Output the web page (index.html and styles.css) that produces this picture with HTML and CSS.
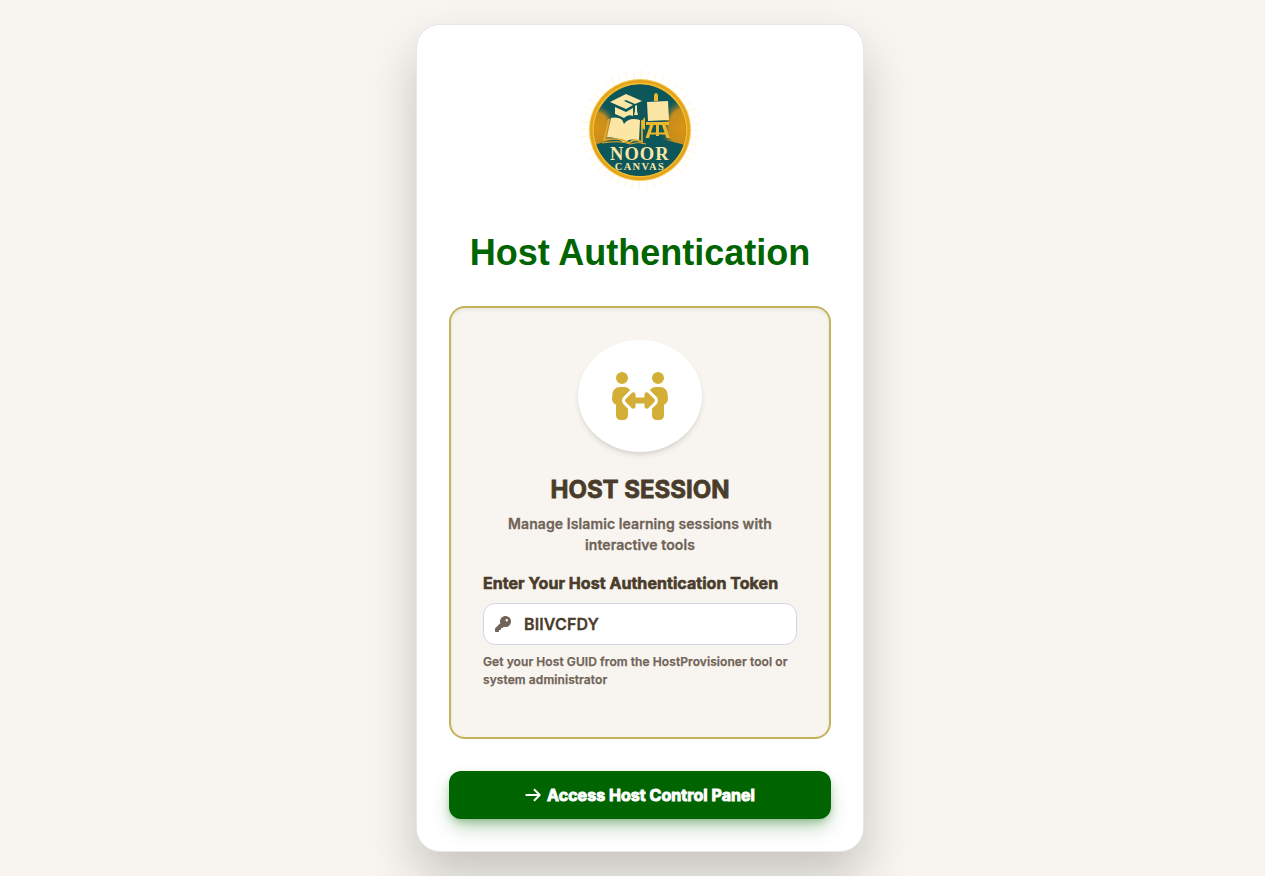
FILE: index.html
```
<!DOCTYPE html>
<html lang="en">
<head>
<meta charset="utf-8">
<title>Host Authentication</title>
<link rel="stylesheet" href="styles.css">
</head>
<body>
<main class="card">
  <div class="logo">
    <svg width="120" height="120" viewBox="0 0 120 120">
      <defs>
        <radialGradient id="glow"><stop offset="0" stop-color="#d99416"/><stop offset=".6" stop-color="#c58c1c"/><stop offset="1" stop-color="#0d575b" stop-opacity="0"/></radialGradient>
        <clipPath id="disc"><circle cx="60" cy="60" r="46"/></clipPath>
      </defs>
      <circle class="rays" cx="60" cy="60" r="54"/>
      <circle cx="60" cy="60" r="51" fill="#f6ca55"/>
      <circle cx="60" cy="60" r="50" fill="#e3a31d"/>
      <circle cx="60" cy="60" r="47.5" fill="#f4bb2c"/>
      <g clip-path="url(#disc)">
        <circle cx="60" cy="60" r="45.7" fill="#0d575b"/>
        <ellipse cx="17" cy="58" rx="20" ry="25" fill="url(#glow)"/>
        <ellipse cx="102" cy="58" rx="22" ry="31" fill="url(#glow)"/>
        <path d="M10 77Q30 67 51 76Q76 64 110 77V112H10z" fill="#0d575b"/>
      </g>
      <g fill="#fbe6a5">
        <path d="M30 32L46 24L62 31L55 34L46 30L44 31L53 35L46 39z"/>
        <path d="M35 37L46 42L53 38V46Q48 44 44 48Q40 46 35 44z"/>
        <path d="M55 36L57 35V41L58 45H54L55 41z"/>
        <path d="M31 48Q42 46 44 54Q49 47 60 50L59 71Q50 67 44 73Q38 67 27 67z"/>
        <path d="M67 32L88 31L89 50L68 51z"/>
      </g>
      <g fill="none" stroke="#e4aa2e" stroke-width="1.7">
        <path d="M29 49L24 70Q40 67 49 73Q54 68 62 72V50"/>
        <path d="M22 73Q40 70 50 74Q58 71 66 74" stroke-width="1"/>
      </g>
      <path d="M74 31V25Q76 21 78 25V31zM66 52H89V55H66zM70 55H73.5L69 68H65.5zM76 55H79V66H76zM82 55H85.5L90 68H86.500zM70 62.500H86V64.500H70zM61 52L65 47V60L62 58z" fill="#efb72c"/>
      <text class="logo-name" x="59.3" y="89.5" textLength="58.500">NOOR</text>
      <text class="logo-sub" x="59.3" y="100.400" textLength="49">CANVAS</text>
    </svg>
  </div>
  <h1 class="title">Host Authentication</h1>
  <section class="panel">
    <div class="badge">
      <svg width="60" height="48" viewBox="0 0 640 512" fill="#d4af37"><path d="M64 64a64 64 0 1 1 128 0A64 64 0 1 1 64 64zM25.9 233.4C29.3 191.9 64 160 105.6 160h44.8c27 0 51 13.4 65.5 34.1c-2.7 1.9-5.2 4-7.5 6.3l-64 64c-21.9 21.9-21.9 57.3 0 79.2L192 391.2V464c0 26.5-21.5 48-48 48H112c-26.5 0-48-21.5-48-48V348.3c-26.5-9.5-44.7-35.8-42.2-65.6l4.1-49.3zM448 64a64 64 0 1 1 128 0A64 64 0 1 1 448 64zM431.6 200.4c-2.3-2.3-4.9-4.4-7.5-6.3c14.5-20.7 38.6-34.1 65.5-34.1h44.8c41.6 0 76.3 31.9 79.7 73.4l4.1 49.3c2.5 29.8-15.7 56.1-42.2 65.6V464c0 26.5-21.5 48-48 48H496c-26.5 0-48-21.5-48-48V391.2l47.6-47.6c21.9-21.9 21.9-57.3 0-79.2l-64-64zM272 240v32h96V240c0-9.7 5.8-18.5 14.8-22.2s19.3-1.7 26.2 5.2l64 64c9.4 9.4 9.4 24.6 0 33.9l-64 64c-6.9 6.9-17.2 8.9-26.2 5.2s-14.8-12.5-14.8-22.2V336H272v32c0 9.7-5.8 18.5-14.8 22.2s-19.3 1.7-26.2-5.2l-64-64c-9.4-9.4-9.4-24.6 0-33.9l64-64c6.9-6.9 17.2-8.9 26.2-5.2s14.8 12.5 14.8 22.2z"/></svg>
    </div>
    <h2 class="heading">HOST SESSION</h2>
    <p class="subtitle">Manage Islamic learning sessions with interactive tools</p>
    <label class="label">Enter Your Host Authentication Token</label>
    <div class="field">
      <svg width="16" height="16" viewBox="0 0 512 512" fill="#706357"><path d="M336 352c97.2 0 176-78.8 176-176S433.2 0 336 0S160 78.8 160 176c0 18.7 2.9 36.8 8.3 53.7L7 391c-4.5 4.5-7 10.6-7 17v80c0 13.3 10.7 24 24 24h80c13.3 0 24-10.7 24-24V448h40c13.3 0 24-10.7 24-24V384h40c6.4 0 12.5-2.5 17-7l33.3-33.3c16.9 5.4 35 8.3 53.7 8.3zM376 96a40 40 0 1 1 0 80 40 40 0 1 1 0-80z"/></svg>
      <span>BIIVCFDY</span>
    </div>
    <p class="hint">Get your Host GUID from the HostProvisioner tool or system administrator</p>
  </section>
  <button class="submit">
    <svg width="18" height="18" viewBox="0 0 24 24" fill="none" stroke="#fff" stroke-width="2.6" stroke-linecap="round" stroke-linejoin="round"><path d="M14 5l7 7m0 0l-7 7m7-7H3"/></svg>
    <span>Access Host Control Panel</span>
  </button>
</main>
</body>
</html>
```
FILE: styles.css
```
* { box-sizing: border-box; }
html { overflow: hidden; }
body {
  margin: 0;
  height: 876px;
  padding: 24px 0 0 15px;
  overflow: hidden;
  background: #f8f5f0;
  font-family: Inter, "Liberation Sans", sans-serif;
  font-weight: 600;
  color: #4a3c2b;
}
.card {
  width: 448px;
  height: 828px;
  margin: 0 auto;
  padding: 32px;
  border: 1px solid #e5e7eb;
  border-radius: 24px;
  background: #fff;
  box-shadow: 0 25px 50px rgba(0, 0, 0, .2);
}
.logo { display: flex; justify-content: center; padding-top: 13px; height: 173px; }
.rays { fill: none; stroke: #fef6dd; stroke-width: 12; stroke-dasharray: 1 6.07; }
.logo-name, .logo-sub { font-family: "Liberation Serif", serif; font-weight: 700; fill: #fbe6a5; text-anchor: middle; }
.logo-name { font-size: 18.5px; }
.logo-sub { font-size: 10.5px; }
.title {
  margin: 0;
  height: 76px;
  font: 700 36px/45px "Liberation Sans", Arial, sans-serif;
  text-align: center;
  color: #006400;
}
.panel {
  height: 433px;
  padding: 32px;
  border: 2px solid #c5b358;
  border-radius: 16px;
  background: #f8f5f0;
  box-shadow: inset 0 2px 4px rgba(0, 0, 0, .06);
}
.badge {
  display: flex;
  align-items: center;
  justify-content: center;
  width: 124px;
  height: 112px;
  margin: 0 auto 22px;
  border-radius: 50%;
  background: #fff;
  box-shadow: 0 4px 6px -1px rgba(0, 0, 0, .1), 0 2px 4px -2px rgba(0, 0, 0, .1);
}
.heading {
  margin: 0 0 7px;
  font-size: 24px;
  line-height: 32px;
  font-weight: 700;
  text-align: center;
  -webkit-text-stroke: .8px currentColor;
}
.subtitle { margin: 0 0 16px; font-size: 14px; line-height: 21px; letter-spacing: .09px; text-align: center; color: #706357; -webkit-text-stroke: .3px currentColor; }
.label { display: block; margin-bottom: 8px; font-size: 16px; line-height: 24px; font-weight: 700; letter-spacing: .05px; -webkit-text-stroke: .6px currentColor; }
.field {
  display: flex;
  align-items: center;
  gap: 13px;
  height: 42px;
  padding: 0 11px;
  border: 1px solid #d1d5db;
  border-radius: 12px;
  background: #fff;
  font-size: 16px;
  letter-spacing: .15px;
  -webkit-text-stroke: .3px currentColor;
}
.hint { margin: 8px 0 0; font-size: 12px; line-height: 18px; letter-spacing: .08px; color: #706357; -webkit-text-stroke: .25px currentColor; }
.submit {
  display: flex;
  align-items: center;
  justify-content: center;
  gap: 5.5px;
  width: 100%;
  height: 48px;
  margin-top: 32px;
  padding: 0 1.5px 0 0;
  border: 0;
  border-radius: 12px;
  background: #006400;
  color: #fff;
  font: 700 16px/24px Inter, sans-serif;
  box-shadow: 0 10px 20px -3px rgba(0, 100, 0, .3), 0 4px 8px -2px rgba(0, 100, 0, .3);
}
.submit span { letter-spacing: .04px; -webkit-text-stroke: .9px currentColor; }
```
